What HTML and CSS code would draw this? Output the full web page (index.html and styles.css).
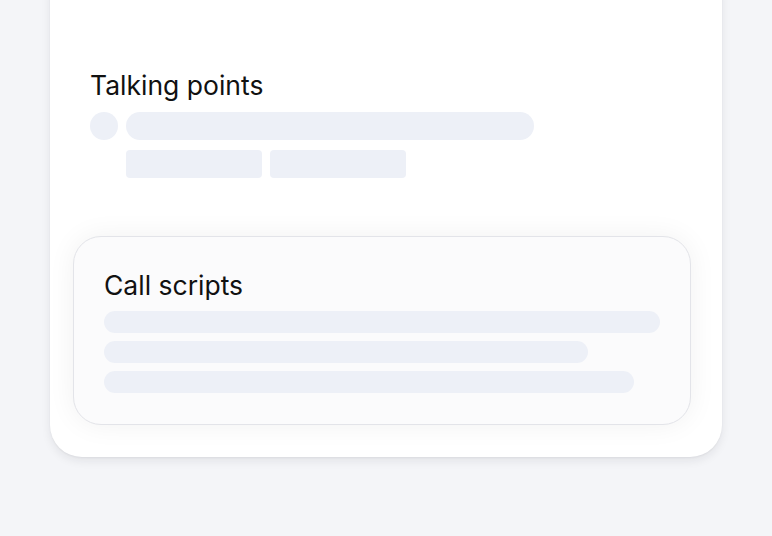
FILE: index.html
```html
<!DOCTYPE html>
<html>
<head>
<meta charset="utf-8">
<link rel="stylesheet" href="styles.css">
</head>
<body>
<div class="phone">
  <section class="talking">
    <h2 class="title">Talking points</h2>
    <div class="row">
      <span class="dot"></span>
      <span class="pill wide"></span>
    </div>
    <div class="chips">
      <span class="chip"></span>
      <span class="chip"></span>
    </div>
  </section>
  <section class="scripts">
    <h2 class="title">Call scripts</h2>
    <div class="lines">
      <span class="line l1"></span>
      <span class="line l2"></span>
      <span class="line l3"></span>
    </div>
  </section>
</div>
</body>
</html>
```
FILE: styles.css
```css
html, body {
  margin: 0;
  padding: 0;
  background: #f4f5f8;
  height: 536px;
  overflow: hidden;
  font-family: Inter, "Noto Sans", sans-serif;
}
.phone {
  margin: -40px 0 0 50px;
  width: 672px;
  box-sizing: border-box;
  background: #ffffff;
  border-radius: 32px;
  padding: 109px 31px 32px 23px;
  box-shadow: 0 4px 10px rgba(20, 24, 40, 0.08), 0 1px 2px rgba(20, 24, 40, 0.05);
}
.title {
  margin: 0;
  font-size: 26.5px;
  font-weight: 400;
  line-height: 32px;
  color: #111111;
  letter-spacing: 0;
}
.talking {
  padding-left: 17px;
}
.row {
  display: flex;
  gap: 8px;
  margin-top: 11px;
  align-items: center;
}
.dot {
  width: 28px;
  height: 28px;
  border-radius: 50%;
  background: #edf0f7;
}
.pill {
  height: 28px;
  border-radius: 14px;
  background: #edf0f7;
}
.wide {
  width: 408px;
}
.chips {
  display: flex;
  gap: 8px;
  margin: 10px 0 0 36px;
}
.chip {
  width: 136px;
  height: 28px;
  border-radius: 4px;
  background: #edf0f7;
}
.scripts {
  margin-top: 58px;
  background: #fbfbfc;
  border: 1px solid #e3e4e9;
  border-radius: 28px;
  padding: 32px 30px 31px 30px;
  box-shadow: 0 0 28px rgba(20, 24, 40, 0.06);
}
.lines {
  display: flex;
  flex-direction: column;
  gap: 8px;
  margin-top: 10px;
}
.line {
  display: block;
  height: 22px;
  border-radius: 11px;
  background: #edf0f7;
}
.l1 { width: 556px; }
.l2 { width: 484px; }
.l3 { width: 530px; }
```
